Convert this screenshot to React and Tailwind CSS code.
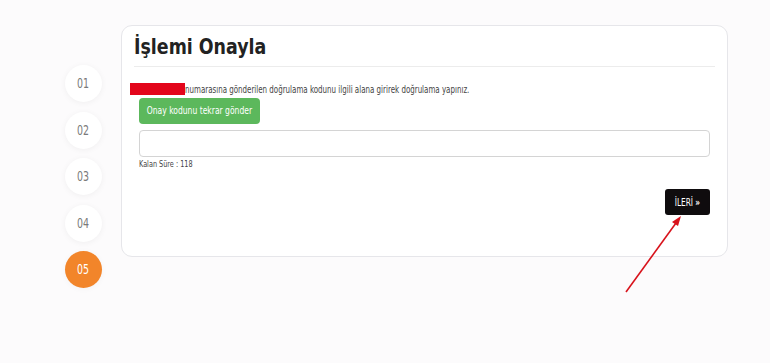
export default function App() {
  const steps = ["01", "02", "03", "04", "05"];
  return (
    <div className="w-[770px] h-[363px] bg-[#fcfbfc] relative overflow-hidden" style={{ fontFamily: '"DejaVu Sans Condensed", "DejaVu Sans", sans-serif' }}>
      <div className="flex pt-[25px]">
        <div className="w-[121px] flex flex-col items-start pl-[65px] pt-[40px] gap-[9.5px]">
          {steps.map((s, i) => (
            <div
              key={s}
              className={
                i === 4
                  ? "w-[37px] h-[37px] rounded-full bg-[#f2852a] text-white flex items-center justify-center text-[14px] shadow-[0_1px_6px_rgba(0,0,0,0.04)]"
                  : "w-[37px] h-[37px] rounded-full bg-white text-[#7a7a7a] flex items-center justify-center text-[14px] shadow-[0_1px_6px_rgba(0,0,0,0.05)]"
              }
            >
              <span className="inline-block scale-x-[0.75]">{s}</span>
            </div>
          ))}
        </div>
        <div className="w-[607px] h-[232px] bg-white border border-[#e6e6ea] rounded-[11px] px-[11px] pt-[8px]">
          <div className="border-b border-[#ececec] pb-[6px] mx-[1px]">
            <h1 className="text-[22px] font-bold text-[#222] leading-[26px] whitespace-nowrap">
              <span className="inline-block scale-x-[0.88] origin-left">İşlemi Onayla</span>
            </h1>
          </div>
          <div className="mt-[16px] flex items-center text-[10.5px] text-[#444] -ml-[3px] leading-[12px] whitespace-nowrap">
            <span className="inline-block w-[55px] h-[12px] bg-[#e3051b] shrink-0"></span>
            <span className="inline-block scale-x-[0.75] origin-left">numarasına gönderilen doğrulama kodunu ilgili alana girirek doğrulama yapınız.</span>
          </div>
          <div className="pl-[6px]">
            <button className="mt-[3px] h-[26px] w-[121px] rounded-[4px] bg-[#5cb85c] text-white text-[11px] flex items-center justify-center whitespace-nowrap">
              <span className="inline-block scale-x-[0.77]">Onay kodunu tekrar gönder</span>
            </button>
            <div className="mt-[6px] h-[27px] w-[571px] border border-[#d4d4d4] rounded-[4px]"></div>
            <div className="mt-[1px] text-[9.5px] leading-[12px] text-[#444] whitespace-nowrap">
              <span className="inline-block scale-x-[0.76] origin-left">Kalan Süre : 118</span>
            </div>
            <div className="flex justify-end w-[571px] mt-[19px]">
              <button className="h-[26px] w-[45px] rounded-[3px] bg-[#0f0c0e] text-white text-[10px] flex items-center justify-center whitespace-nowrap">
                <span className="inline-block scale-x-[0.82]">İLERİ <span className="font-bold">»</span></span>
              </button>
            </div>
          </div>
        </div>
      </div>
      <svg className="absolute left-0 top-0" width="770" height="363" viewBox="0 0 770 363">
        <line x1="626" y1="292" x2="676" y2="223" stroke="#d8121b" strokeWidth="1.6" />
        <polygon points="681,216 672,222 678,226" fill="#d8121b" />
      </svg>
    </div>
  );
}
